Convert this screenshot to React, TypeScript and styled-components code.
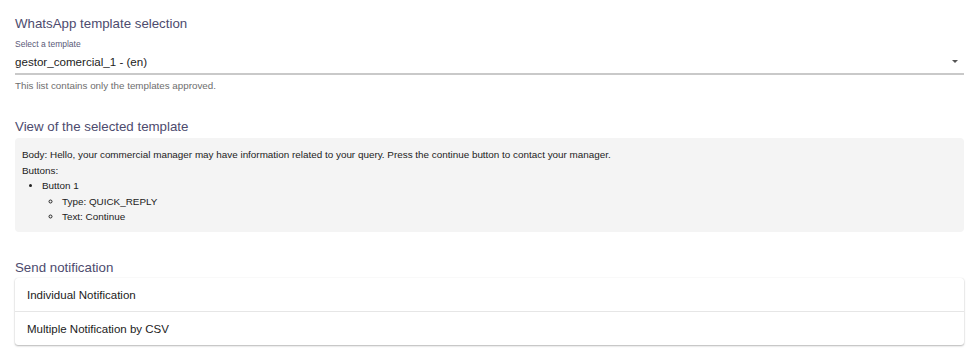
import React from 'react';
import styled, { createGlobalStyle } from 'styled-components';

const GlobalStyle = createGlobalStyle`
  body {
    margin: 0;
    background: #ffffff;
    font-family: 'Liberation Sans', Arial, sans-serif;
  }
`;

const Page = styled.div`
  width: 980px;
  height: 361px;
  padding: 16px 16px 0 15px;
  box-sizing: border-box;
  display: flex;
  flex-direction: column;
`;

const Heading = styled.h2<{ $top?: number }>`
  margin: ${(p) => p.$top ?? 0}px 0 0 0;
  font-size: 13.3px;
  font-weight: 400;
  line-height: 16px;
  color: #4d4b6e;
`;

const Field = styled.div`
  margin-top: 7px;
  display: flex;
  flex-direction: column;
`;

const Label = styled.label`
  font-size: 8.5px;
  line-height: 10px;
  color: #5a5a78;
`;

const SelectBox = styled.div`
  display: flex;
  align-items: center;
  justify-content: space-between;
  height: 24px;
  border-bottom: 2px solid #c9c9c9;
`;

const SelectValue = styled.span`
  font-size: 11.6px;
  color: #222222;
`;

const Arrow = styled.span`
  width: 0;
  height: 0;
  margin-right: 6px;
  border-left: 3.5px solid transparent;
  border-right: 3.5px solid transparent;
  border-top: 3.5px solid #555555;
`;

const Helper = styled.span`
  margin-top: 5px;
  font-size: 9.8px;
  line-height: 12px;
  color: #6e6e6e;
`;

const Preview = styled.div`
  margin-top: 3px;
  background: #f4f4f4;
  border-radius: 4px;
  padding: 9px 7px 7.5px 7px;
  font-size: 9.9px;
  line-height: 15.5px;
  color: #222222;
`;

const Line = styled.div``;

const List = styled.ul<{ $type: string }>`
  margin: 0;
  padding-left: 20px;
  list-style-type: ${(p) => p.$type};
`;

const Card = styled.div`
  margin-top: 2px;
  background: #ffffff;
  border-radius: 3px;
  box-shadow: 0 1px 2px rgba(0, 0, 0, 0.28), 0 0 1px rgba(0, 0, 0, 0.12);
  display: flex;
  flex-direction: column;
`;

const Row = styled.div`
  height: 33px;
  display: flex;
  align-items: center;
  padding-left: 12px;
  font-size: 11.5px;
  color: #222222;
  & + & {
    border-top: 1px solid #e6e6e6;
  }
`;

export default function App() {
  return (
    <>
      <GlobalStyle />
      <Page>
        <Heading>WhatsApp template selection</Heading>
        <Field>
          <Label>Select a template</Label>
          <SelectBox>
            <SelectValue>gestor_comercial_1 - (en)</SelectValue>
            <Arrow />
          </SelectBox>
          <Helper>This list contains only the templates approved.</Helper>
        </Field>

        <Heading $top={27}>View of the selected template</Heading>
        <Preview>
          <Line>
            Body: Hello, your commercial manager may have information related to your query. Press the
            continue button to contact your manager.
          </Line>
          <Line>Buttons:</Line>
          <List $type="disc">
            <li>
              Button 1
              <List $type="circle">
                <li>Type: QUICK_REPLY</li>
                <li>Text: Continue</li>
              </List>
            </li>
          </List>
        </Preview>

        <Heading $top={28}>Send notification</Heading>
        <Card>
          <Row>Individual Notification</Row>
          <Row>Multiple Notification by CSV</Row>
        </Card>
      </Page>
    </>
  );
}
